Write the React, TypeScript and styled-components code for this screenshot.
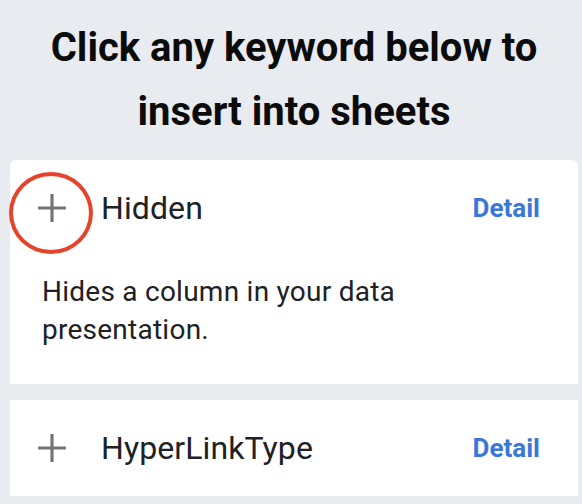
import React from "react";
import styled, { createGlobalStyle } from "styled-components";

const Global = createGlobalStyle`
  html, body { margin: 0; padding: 0; background: #e8ebf0; }
  body { font-family: Roboto, "Noto Sans", Arial, sans-serif; -webkit-font-smoothing: antialiased; }
`;

const Page = styled.div`
  min-height: 100vh;
  box-sizing: border-box;
  background: #e8ebf0;
  padding: 0 4px 0 10px;
  overflow: hidden;
`;

const Title = styled.h1`
  margin: 0;
  padding: 16px 0 16px;
  height: 160px;
  box-sizing: border-box;
  text-align: center;
  font-size: 40px;
  line-height: 64px;
  font-weight: 700;
  color: #0b0b0b;
`;

const List = styled.div`
  display: flex;
  flex-direction: column;
  gap: 16px;
`;

const Card = styled.div<{ $rounded?: boolean }>`
  background: #ffffff;
  border-radius: ${(p) => (p.$rounded ? "6px 6px 0 0" : "0")};
`;

const Header = styled.div`
  height: 96px;
  display: flex;
  align-items: center;
  padding: 0 38px 0 28px;
`;

const PlusButton = styled.button`
  position: relative;
  width: 28px;
  height: 28px;
  padding: 0;
  border: 0;
  background: transparent;
  display: flex;
  align-items: center;
  justify-content: center;
  cursor: pointer;
  margin-right: 35px;
`;

const Highlight = styled.span`
  position: absolute;
  left: 50%;
  top: 50%;
  width: 76px;
  height: 74px;
  margin-left: -43.5px;
  margin-top: -36px;
  border: 4.5px solid #e6432b;
  border-radius: 50%;
  pointer-events: none;
`;

const Name = styled.span`
  font-size: 32px;
  font-weight: 400;
  color: #202124;
  letter-spacing: 0.1px;
`;

const DetailLink = styled.a`
  margin-left: auto;
  font-size: 26px;
  font-weight: 700;
  color: #3a77d7;
  text-decoration: none;
  cursor: pointer;
`;

const Description = styled.p`
  margin: 0;
  padding: 17px 120px 35px 32px;
  font-size: 28px;
  letter-spacing: 0.25px;
  line-height: 38px;
  color: #202124;
`;

const PlusIcon = () => (
  <svg width="28" height="28" viewBox="0 0 28 28">
    <path d="M14 0v28M0 14h28" stroke="#757575" strokeWidth="3.2" fill="none" />
  </svg>
);

type Keyword = { name: string; description?: string; highlighted?: boolean };

const keywords: Keyword[] = [
  {
    name: "Hidden",
    description: "Hides a column in your data presentation.",
    highlighted: true,
  },
  { name: "HyperLinkType" },
];

export default function App() {
  return (
    <Page>
      <Global />
      <Title>
        Click any keyword below to
        <br />
        insert into sheets
      </Title>
      <List>
        {keywords.map((k, i) => (
          <Card key={k.name} $rounded={i === 0}>
            <Header>
              <PlusButton aria-label={`Insert ${k.name}`}>
                <PlusIcon />
                {k.highlighted && <Highlight />}
              </PlusButton>
              <Name>{k.name}</Name>
              <DetailLink>Detail</DetailLink>
            </Header>
            {k.description && <Description>{k.description}</Description>}
          </Card>
        ))}
      </List>
    </Page>
  );
}
